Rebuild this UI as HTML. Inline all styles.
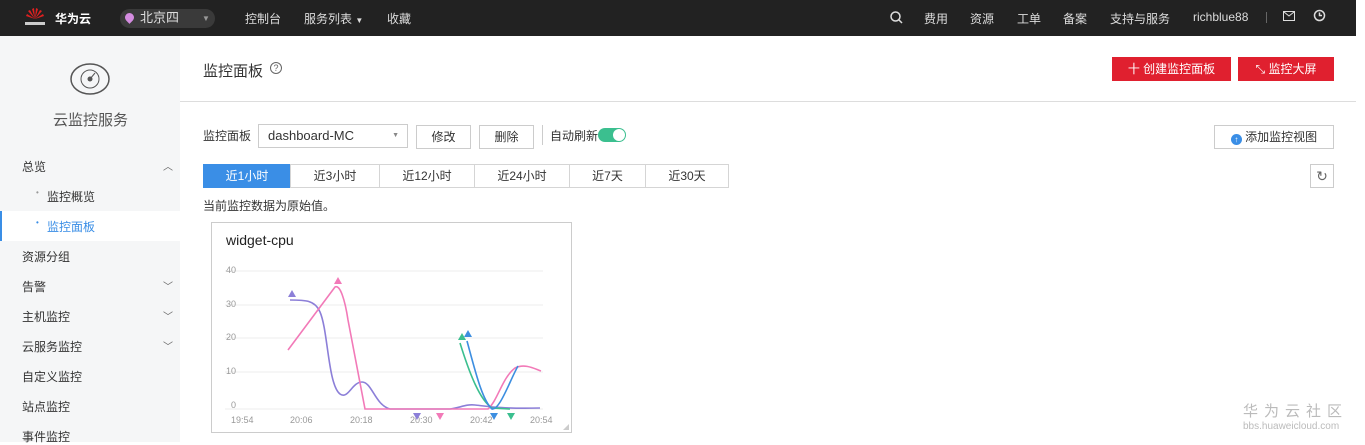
<!DOCTYPE html>
<html><head><meta charset="utf-8"><style>
*{margin:0;padding:0;box-sizing:border-box}
body{width:1365px;height:442px;overflow:hidden;background:#fff;font-family:"Liberation Sans","Noto Sans CJK SC",sans-serif;font-size:12px;color:#333;position:relative}
.a{position:absolute;white-space:nowrap}
#top{left:0;top:0;width:1356px;height:36px;background:#222}
#top .t{color:#ddd;font-size:12px;top:10px}
#side{left:0;top:36px;width:180px;height:406px;background:#f5f6f7}
.nav{left:22px;font-size:12px;color:#333}
.chev{left:163px;font-size:10px;color:#666}
.btn{border:1px solid #ccc;background:#fff;text-align:center;line-height:22px;height:24px;font-size:12px}
.red{background:#e0202f;color:#fff;text-align:center;line-height:24px;height:24px;font-size:12px}
.tab{top:164px;height:24px;line-height:22px;border:1px solid #d5d5d5;text-align:center;font-size:12px;color:#333;background:#fff}
</style></head><body>
<div id="top" class="a"></div>
<svg class="a" style="left:24px;top:6px" width="22" height="22" viewBox="0 0 22 22"><g fill="#e02020"><path d="M11 13 L8 3 L10 2Z"/><path d="M11 13 L12 2 L14 3Z"/><path d="M11 13 L4 5 L6 4Z"/><path d="M11 13 L16 4 L18 5Z"/><path d="M11 13 L2 10 L3 8Z"/><path d="M11 13 L19 8 L20 10Z"/></g><rect x="1" y="16" width="20" height="3" fill="#ccc"/></svg>
<div class="a" style="left:55px;top:10px;color:#fff;font-weight:bold;font-size:12px">华为云</div>
<div class="a" style="left:120px;top:9px;width:95px;height:19px;border-radius:10px;background:#3a3a3a"></div>
<div class="a" style="left:125px;top:13px;width:9px;height:9px;border-radius:50% 50% 50% 0;transform:rotate(-45deg);background:#d48ce0"></div>
<div class="a" style="left:140px;top:10px;color:#ddd;font-size:13px;line-height:16px">北京四</div>
<div class="a" style="left:202px;top:14px;color:#999;font-size:8px">▼</div>
<div class="a t" style="left:245px;color:#ddd;top:10px">控制台</div>
<div class="a t" style="left:304px;color:#ddd;top:10px">服务列表 <span style="font-size:8px">▼</span></div>
<div class="a t" style="left:387px;color:#ddd;top:10px">收藏</div>
<svg class="a" style="left:890px;top:11px" width="13" height="13"><circle cx="5.5" cy="5.5" r="4.5" fill="none" stroke="#ddd" stroke-width="1.5"/><path d="M9 9l3 3" stroke="#ddd" stroke-width="1.5"/></svg>
<div class="a t" style="left:924px;color:#ddd;top:10px">费用</div>
<div class="a t" style="left:970px;color:#ddd;top:10px">资源</div>
<div class="a t" style="left:1017px;color:#ddd;top:10px">工单</div>
<div class="a t" style="left:1063px;color:#ddd;top:10px">备案</div>
<div class="a t" style="left:1110px;color:#ddd;top:10px">支持与服务</div>
<div class="a t" style="left:1193px;color:#ddd;top:10px">richblue88</div>
<div class="a" style="left:1266px;top:12px;width:1px;height:11px;background:#666"></div>
<svg class="a" style="left:1283px;top:11px" width="12" height="10"><rect x="0.5" y="0.5" width="11" height="9" fill="none" stroke="#ddd"/><path d="M1 1l5 4 5-4" fill="none" stroke="#ddd"/></svg>
<svg class="a" style="left:1313px;top:9px" width="13" height="13"><circle cx="6.5" cy="6.5" r="5" fill="none" stroke="#ddd" stroke-width="1.5"/><path d="M6.5 3.5v3h2.5" fill="none" stroke="#ddd" stroke-width="1.5"/></svg>

<div id="side" class="a"></div>
<svg class="a" style="left:70px;top:62px" width="40" height="34"><ellipse cx="20" cy="17" rx="19" ry="15" fill="none" stroke="#555" stroke-width="1.5"/><circle cx="20" cy="17" r="9" fill="none" stroke="#555"/><circle cx="20" cy="17" r="2.5" fill="#555"/><path d="M20 17l5-6" stroke="#555"/></svg>
<div class="a" style="left:53px;top:109px;font-size:15px;color:#555">云监控服务</div>
<div class="a nav" style="top:158px">总览</div><div class="a chev" style="top:158px">︿</div>
<div class="a nav" style="top:188px;left:36px;color:#999;font-size:8px">•</div><div class="a nav" style="top:188px;left:47px">监控概览</div>
<div class="a" style="left:0;top:211px;width:180px;height:30px;background:#fff"></div>
<div class="a" style="left:0;top:211px;width:2px;height:30px;background:#3a8ee6"></div>
<div class="a nav" style="top:218px;left:36px;color:#3a8ee6;font-size:8px">•</div><div class="a nav" style="top:218px;left:47px;color:#3a8ee6">监控面板</div>
<div class="a nav" style="top:248px">资源分组</div>
<div class="a nav" style="top:278px">告警</div><div class="a chev" style="top:278px">﹀</div>
<div class="a nav" style="top:308px">主机监控</div><div class="a chev" style="top:308px">﹀</div>
<div class="a nav" style="top:338px">云服务监控</div><div class="a chev" style="top:338px">﹀</div>
<div class="a nav" style="top:368px">自定义监控</div>
<div class="a nav" style="top:398px">站点监控</div>
<div class="a nav" style="top:428px">事件监控</div>

<div class="a" style="left:203px;top:60px;font-size:15px;color:#333">监控面板</div>
<div class="a" style="left:270px;top:62px;width:12px;height:12px;border:1px solid #666;border-radius:50%;font-size:9px;line-height:10px;text-align:center;color:#666">?</div>
<div class="a red" style="left:1112px;top:57px;width:119px">十 创建监控面板</div>
<div class="a red" style="left:1238px;top:57px;width:96px">⤡ 监控大屏</div>
<div class="a" style="left:180px;top:101px;width:1176px;height:1px;background:#ddd"></div>

<div class="a" style="left:203px;top:127px">监控面板</div>
<div class="a btn" style="left:258px;top:124px;width:150px;text-align:left;padding-left:9px;font-size:13px">dashboard-MC<span style="position:absolute;right:8px;font-size:7px;color:#888">▼</span></div>
<div class="a btn" style="left:416px;top:125px;width:55px">修改</div>
<div class="a btn" style="left:479px;top:125px;width:55px">删除</div>
<div class="a" style="left:542px;top:125px;width:1px;height:20px;background:#ccc"></div>
<div class="a" style="left:550px;top:127px">自动刷新</div>
<div class="a" style="left:598px;top:128px;width:28px;height:14px;border-radius:7px;background:#3bbf8f"></div>
<div class="a" style="left:613px;top:129px;width:12px;height:12px;border-radius:50%;background:#fff"></div>
<div class="a btn" style="left:1214px;top:125px;width:120px;height:24px">
<span style="display:inline-block;width:11px;height:11px;border-radius:50%;background:#3a8ee6;color:#fff;font-size:8px;line-height:11px;vertical-align:-1px">↑</span> 添加监控视图</div>

<div class="a tab" style="left:203px;width:88px;background:#3a8ee6;border-color:#3a8ee6;color:#fff">近1小时</div>
<div class="a tab" style="left:290px;width:90px">近3小时</div>
<div class="a tab" style="left:379px;width:96px">近12小时</div>
<div class="a tab" style="left:474px;width:96px">近24小时</div>
<div class="a tab" style="left:569px;width:77px">近7天</div>
<div class="a tab" style="left:645px;width:84px">近30天</div>
<div class="a btn" style="left:1310px;top:164px;width:24px;font-size:14px;color:#666">↻</div>
<div class="a" style="left:203px;top:197px">当前监控数据为原始值。</div>

<div class="a" style="left:211px;top:222px;width:361px;height:211px;border:1px solid #ccc"></div>
<div class="a" style="left:226px;top:232px;font-size:14px;color:#222">widget-cpu</div>
<svg class="a" style="left:0;top:0" width="600" height="442" font-family="Liberation Sans" font-size="9" fill="#999">
<g stroke="#eee"><line x1="225" y1="271" x2="543" y2="271"/><line x1="225" y1="305" x2="543" y2="305"/><line x1="225" y1="338" x2="543" y2="338"/><line x1="225" y1="372" x2="543" y2="372"/><line x1="225" y1="409" x2="543" y2="409"/></g>
<text x="226" y="273">40</text><text x="226" y="307">30</text><text x="226" y="340">20</text><text x="226" y="374">10</text><text x="231" y="408">0</text>
<text x="231" y="423">19:54</text><text x="290" y="423">20:06</text><text x="350" y="423">20:18</text><text x="410" y="423">20:30</text><text x="470" y="423">20:42</text><text x="530" y="423">20:54</text>
<g fill="none" stroke-width="1.6">
<path d="M290 300 C305 300 315 300 320 312 C328 330 328 385 340 394 C348 400 352 382 362 382 C372 382 375 405 390 409 L450 409 C460 408 465 404 475 405 C485 406 500 409 540 408" stroke="#8c7fd8"/>
<path d="M288 350 L335 287 C340 284 345 300 348 320 L365 409 L488 409 C498 400 502 378 515 368 C525 363 535 369 541 371" stroke="#f27ab8"/>
<path d="M460 343 C470 375 480 400 492 408 L510 409" stroke="#3bbf8f"/>
<path d="M467 341 C475 370 482 400 492 409 C500 410 510 380 518 366" stroke="#3d8ee0"/>
</g>
<path d="M288 297l4-7 4 7z" fill="#8c7fd8"/><path d="M334 284l4-7 4 7z" fill="#f27ab8"/>
<path d="M458 340l4-7 4 7z" fill="#3bbf8f"/><path d="M464 337l4-7 4 7z" fill="#3d8ee0"/>
<path d="M413 413l4 7 4-7z" fill="#8c7fd8"/><path d="M436 413l4 7 4-7z" fill="#f27ab8"/>
<path d="M490 413l4 7 4-7z" fill="#3d8ee0"/><path d="M507 413l4 7 4-7z" fill="#3bbf8f"/>
<path d="M569 430l-6 0 6-6z" fill="#ccc"/>
</svg>
<div class="a" style="left:1243px;top:400px;font-size:15px;color:#bbb;letter-spacing:6px">华为云社区</div>
<div class="a" style="left:1243px;top:421px;font-size:10px;color:#bbb">bbs.huaweicloud.com</div>
</body></html>
